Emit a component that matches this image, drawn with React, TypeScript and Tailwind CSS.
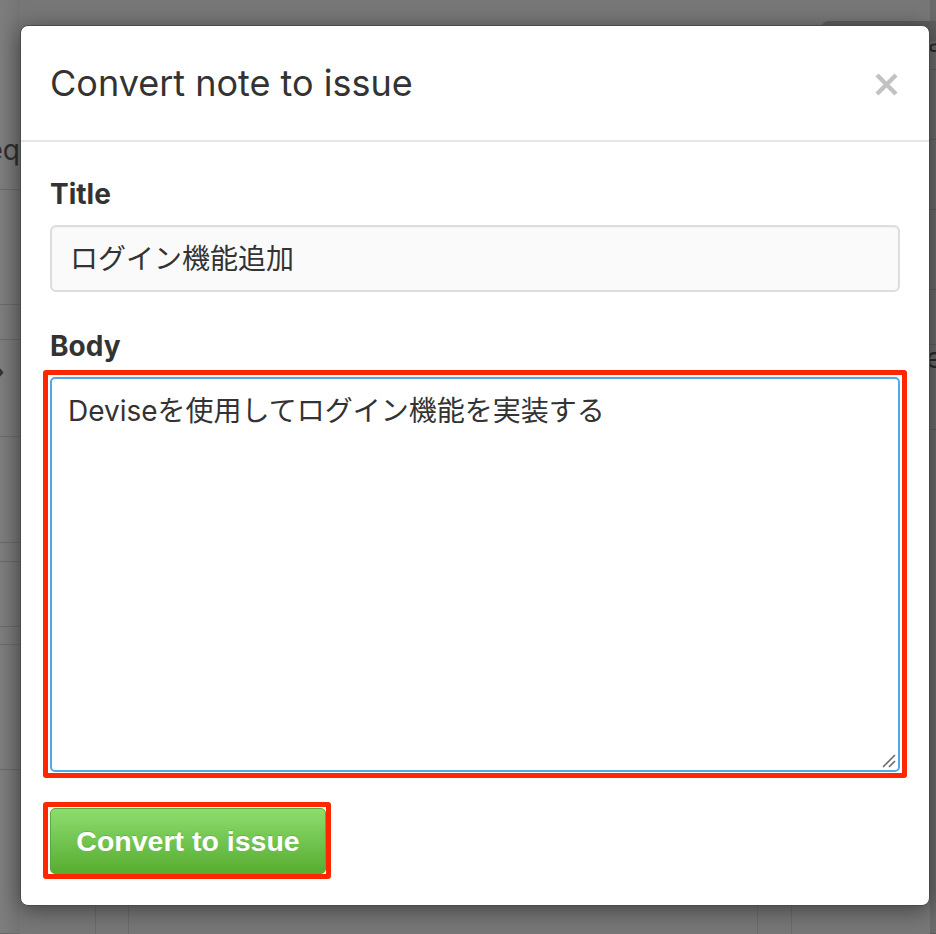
import React from "react";

const sans = { fontFamily: 'Inter, "Noto Sans CJK JP", "Noto Sans", sans-serif' };

const leftRows = [190, 115, 35, 97, 106, 19, 65, 18, 125, 164];
const rightRows = [70, 70, 70, 80, 55, 85, 504];
const centerCols = [75, 33, 629, 34, 139];

export default function App() {
  return (
    <div className="relative h-[934px] w-[936px] overflow-hidden bg-[#777777]" style={sans}>
      {/* dimmed project board in the background */}
      <div className="flex h-full w-full">
        <div className="flex w-[20px] shrink-0 flex-col overflow-hidden bg-gradient-to-r from-[#7e7e7e] to-[#747474]">
          {leftRows.map((h, i) => (
            <div key={i} className="relative shrink-0 border-b border-[#696969]" style={{ height: h }}>
              {i === 0 && (
                <span className="absolute bottom-[22px] right-[0px] whitespace-nowrap text-[28px] leading-[34px] text-[#2e2e2e]">eq</span>
              )}
              {i === 3 && (
                <span className="absolute left-[-6px] top-[14px] text-[28px] leading-[34px] text-[#2e2e2e]">›</span>
              )}
            </div>
          ))}
        </div>
        <div className="flex flex-1 flex-col">
          <div className="h-[60px] shrink-0" />
          <div className="flex flex-1">
            {centerCols.map((w, i) => (
              <div key={i} className={i === 0 ? "shrink-0" : "shrink-0 border-l border-[#6b6b6b]"} style={{ width: w }} />
            ))}
          </div>
        </div>
        <div className="flex w-[6px] shrink-0 flex-col overflow-hidden bg-[#6a6a6a]">
          {rightRows.map((h, i) => (
            <div key={i} className="relative shrink-0 border-b border-[#5c5c5c]" style={{ height: h }}>
              {i === 0 && <span className="absolute left-[-2px] top-[28px] text-[26px] leading-[30px] text-[#2a2a2a]">a</span>}
              {i === 5 && <span className="absolute left-[-4px] top-[-4px] text-[28px] leading-[34px] text-[#2a2a2a]">e</span>}
            </div>
          ))}
        </div>
      </div>
      <div className="absolute left-[822px] top-[21px] h-[20px] w-[120px] rounded-tl-[6px] bg-[#5e5e5e]" />

      {/* modal */}
      <div className="absolute left-[20px] top-[25px] flex h-[881px] w-[910px] flex-col rounded-[8px] border border-[#4a4a4a] bg-white shadow-[0_4px_22px_rgba(0,0,0,0.45)]">
        <div className="flex h-[116px] shrink-0 items-center justify-between border-b-2 border-[#e5e5e5] pl-[29px] pr-[31px]">
          <h1 className="text-[36px] font-normal leading-[44px] text-[#333333]">Convert note to issue</h1>
          <svg width="23" height="23" viewBox="0 0 23 23" className="mt-[2px]">
            <path d="M2 2 L21 21 M21 2 L2 21" stroke="#c2c2c2" strokeWidth="4.4" strokeLinecap="butt" />
          </svg>
        </div>

        <div className="flex flex-col px-[29px] pt-[35px]">
          <label className="text-[28px] font-bold leading-[34px] text-[#333333]">Title</label>
          <div className="mt-[14px] flex h-[67px] items-center rounded-[6px] border-2 border-[#dddddd] bg-[#fafafa] px-[18px] shadow-[inset_0_1px_2px_rgba(0,0,0,0.04)]">
            <span className="text-[28px] leading-[36px] text-[#333333]">ログイン機能追加</span>
          </div>

          <label className="mt-[37px] text-[28px] font-bold leading-[34px] text-[#333333]">Body</label>
          <div className="relative mt-[14px]">
            <div className="relative h-[395px] rounded-[5px] border-2 border-[#51a7e8] bg-white px-[16px] pt-[14px]">
              <span className="text-[28px] leading-[36px] text-[#333333]">Deviseを使用してログイン機能を実装する</span>
              <svg width="16" height="16" viewBox="0 0 16 16" className="absolute bottom-[1px] right-[1px]">
                <path d="M2 14 L14 2 M8 14 L14 8" stroke="#6a6a6a" strokeWidth="1.6" />
              </svg>
            </div>
            <div className="pointer-events-none absolute bottom-[-6px] left-[-7px] right-[-7px] top-[-7px] rounded-[3px] border-[5px] border-[#ff2600]" />
          </div>

          <div className="relative mt-[36px] self-start">
            <button className="flex h-[66px] w-[276px] items-center justify-center rounded-[5px] border border-[#5ca941] bg-gradient-to-b from-[#8ddd6e] to-[#57ad2f] text-[28.5px] font-bold text-white [text-shadow:0_-1px_0_rgba(0,0,0,0.12)]" style={{ fontFamily: '"Liberation Sans", Arial, sans-serif' }}>
              Convert to issue
            </button>
            <div className="pointer-events-none absolute bottom-[-5px] left-[-7px] right-[-5px] top-[-6px] rounded-[3px] border-[5px] border-[#ff2600]" />
          </div>
        </div>
      </div>
    </div>
  );
}
